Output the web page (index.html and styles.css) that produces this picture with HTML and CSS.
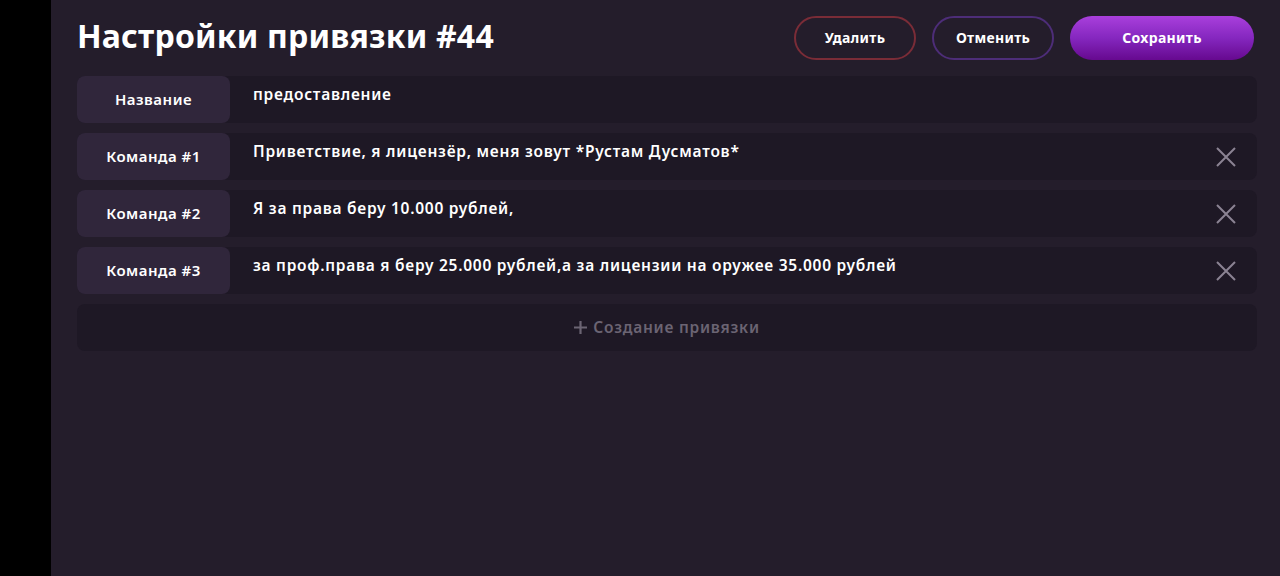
FILE: index.html
```html
<!DOCTYPE html>
<html lang="ru">
<head>
<meta charset="utf-8">
<link rel="stylesheet" href="styles.css">
</head>
<body>
<div class="app">
  <aside class="side"></aside>
  <main class="main">
    <header class="head">
      <h1 class="title">Настройки привязки #44</h1>
      <div class="actions">
        <button class="btn btn-del">Удалить</button>
        <button class="btn btn-cancel">Отменить</button>
        <button class="btn btn-save">Сохранить</button>
      </div>
    </header>
    <section class="rows">
      <div class="row">
        <div class="label">Название</div>
        <div class="value">предоставление</div>
      </div>
      <div class="row">
        <div class="label">Команда #1</div>
        <div class="value">Приветствие, я лицензёр, меня зовут *Рустам Дусматов*</div>
        <span class="close"><svg width="20" height="20" viewBox="0 0 20 20"><path d="M1 1L19 19M19 1L1 19" stroke="#8b8393" stroke-width="2" fill="none"/></svg></span>
      </div>
      <div class="row">
        <div class="label">Команда #2</div>
        <div class="value">Я за права беру 10.000 рублей,</div>
        <span class="close"><svg width="20" height="20" viewBox="0 0 20 20"><path d="M1 1L19 19M19 1L1 19" stroke="#8b8393" stroke-width="2" fill="none"/></svg></span>
      </div>
      <div class="row">
        <div class="label">Команда #3</div>
        <div class="value">за проф.права я беру 25.000 рублей,а за лицензии на оружее 35.000 рублей</div>
        <span class="close"><svg width="20" height="20" viewBox="0 0 20 20"><path d="M1 1L19 19M19 1L1 19" stroke="#8b8393" stroke-width="2" fill="none"/></svg></span>
      </div>
      <div class="add"><svg class="plus" width="13" height="13" viewBox="0 0 13 13"><path d="M6.5 0V13M0 6.5H13" stroke="#6b6473" stroke-width="2.2" fill="none"/></svg>Создание привязки</div>
    </section>
  </main>
</div>
</body>
</html>
```
FILE: styles.css
```css
* { box-sizing: border-box; }
html, body { margin: 0; padding: 0; }
body {
  background: #000;
  font-family: "Noto Sans", "Open Sans", sans-serif;
  color: #fff;
}
.app { display: flex; width: 1280px; height: 576px; overflow: hidden; }
.side { width: 51px; background: #000; flex: none; }
.main {
  flex: 1;
  background: #241d2b;
  padding: 16px 23px 0 26px;
}
.head {
  display: flex;
  align-items: center;
  justify-content: space-between;
  height: 44px;
  margin-bottom: 16px;
  padding-right: 3px;
}
.title {
  margin: 0;
  font-size: 32px;
  font-weight: 700;
  letter-spacing: 0.2px;
  line-height: 44px;
  padding-bottom: 4px;
}
.actions { display: flex; gap: 16px; }
.btn {
  height: 44px;
  border-radius: 22px;
  font-family: inherit;
  font-size: 14px;
  font-weight: 700;
  color: #fff;
  background: transparent;
  letter-spacing: 0.3px;
  padding: 0 0 2px;
}
.btn-del { width: 122px; border: 2px solid #7a2c37; }
.btn-cancel { width: 122px; border: 2px solid #4d2d78; }
.btn-save {
  width: 184px;
  border: none;
  background: linear-gradient(180deg, #a93fdc 0%, #8527bf 50%, #66098f 100%);
}
.rows { display: flex; flex-direction: column; gap: 10px; }
.row {
  display: flex;
  height: 47px;
  background: #1e1825;
  border-radius: 8px;
  position: relative;
}
.label {
  width: 153px;
  flex: none;
  background: #30263b;
  border-radius: 8px;
  display: flex;
  align-items: center;
  justify-content: center;
  font-size: 15px;
  font-weight: 600;
  letter-spacing: 0.5px;
  padding-bottom: 2px;
}
.value {
  flex: 1;
  padding: 7px 0 0 23px;
  font-size: 15.5px;
  font-weight: 600;
  letter-spacing: 0.75px;
}
.close {
  position: absolute;
  right: 21px;
  top: 14px;
  width: 20px;
  height: 20px;
}
.close svg { display: block; }
.add {
  height: 47px;
  background: #1e1825;
  border-radius: 8px;
  display: flex;
  align-items: center;
  justify-content: center;
  font-size: 15.5px;
  font-weight: 600;
  color: #6b6473;
  letter-spacing: 0.75px;
  padding-bottom: 2px;
}
.plus { margin-right: 6px; margin-top: 2px; }
```
